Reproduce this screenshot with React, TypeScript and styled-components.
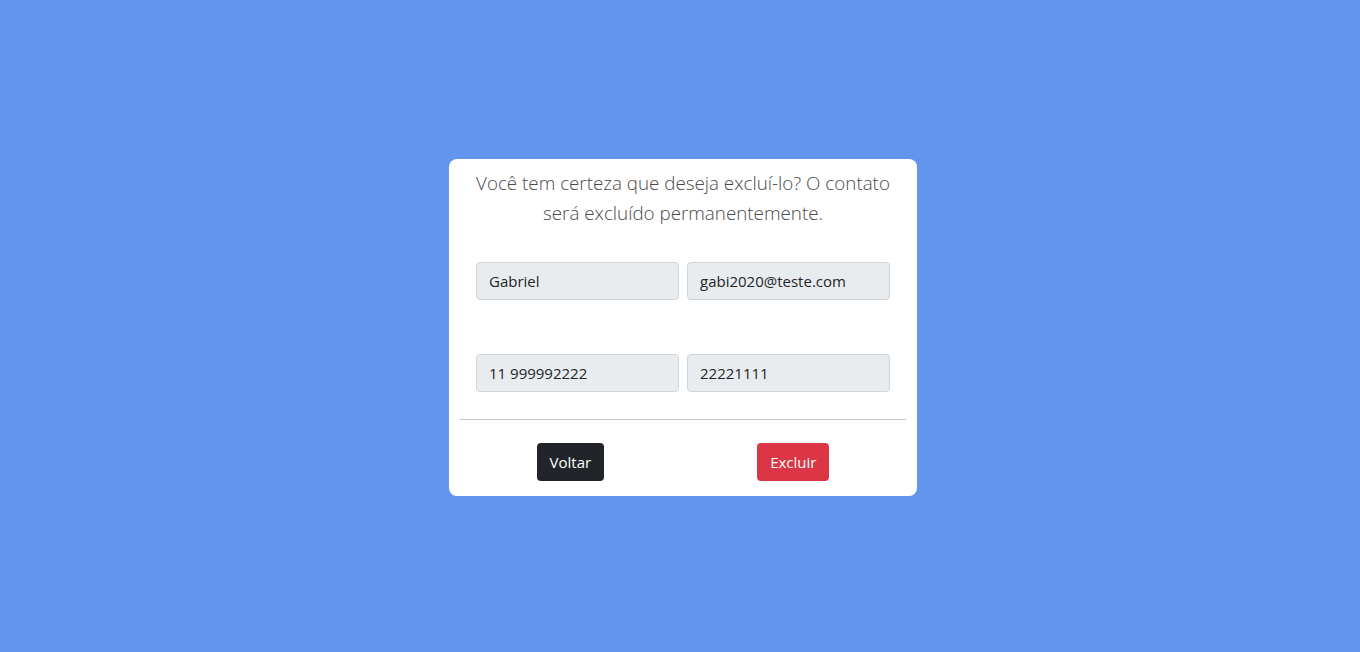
import React from 'react';
import styled, { createGlobalStyle } from 'styled-components';

const GlobalStyle = createGlobalStyle`
  * {
    box-sizing: border-box;
  }
  body {
    margin: 0;
    background: #6495ed;
    font-family: 'Open Sans', 'Noto Sans', sans-serif;
  }
`;

const Page = styled.main`
  width: 100%;
  height: 652px;
  display: flex;
  align-items: center;
  justify-content: center;
  padding-left: 6px;
  background: #6495ed;
`;

const Card = styled.section`
  width: 468px;
  background: #fff;
  border-radius: 8px;
  padding: 9px 11px 15px;
  margin-top: 3px;
`;

const Message = styled.p`
  margin: 0 0 34px;
  padding: 0 10px;
  text-align: center;
  font-size: 18.8px;
  font-weight: 300;
  line-height: 30px;
  color: #4a4a4a;
`;

const Fields = styled.div`
  display: grid;
  grid-template-columns: 1fr 1fr;
  column-gap: 8px;
  row-gap: 54px;
  padding: 0 16px;
`;

const Field = styled.input`
  width: 100%;
  height: 38px;
  padding: 0 12px;
  font-family: inherit;
  font-size: 15px;
  color: #212529;
  background: #e9ecef;
  border: 1px solid #ced4da;
  border-radius: 4px;
`;

const Divider = styled.hr`
  margin: 27px 0 23px;
  border: 0;
  border-top: 1px solid #c4c4c4;
`;

const Actions = styled.div`
  display: flex;
  justify-content: space-around;
`;

const Button = styled.button<{ $variant: 'dark' | 'danger' }>`
  height: 38px;
  padding: 0 13px;
  font-family: inherit;
  font-size: 15px;
  color: #fff;
  border: none;
  border-radius: 4px;
  cursor: pointer;
  background: ${(props) => (props.$variant === 'danger' ? '#dc3545' : '#212529')};
`;

const contact = {
  name: 'Gabriel',
  email: 'gabi2020@teste.com',
  phone: '11 999992222',
  cel: '22221111',
};

const App: React.FC = () => {
  return (
    <Page>
      <GlobalStyle />
      <Card>
        <Message>
          Você tem certeza que deseja excluí-lo? O contato será excluído
          permanentemente.
        </Message>
        <Fields>
          <Field value={contact.name} disabled readOnly />
          <Field value={contact.email} disabled readOnly />
          <Field value={contact.phone} disabled readOnly />
          <Field value={contact.cel} disabled readOnly />
        </Fields>
        <Divider />
        <Actions>
          <Button $variant='dark'>Voltar</Button>
          <Button $variant='danger'>Excluir</Button>
        </Actions>
      </Card>
    </Page>
  );
};

export default App;
